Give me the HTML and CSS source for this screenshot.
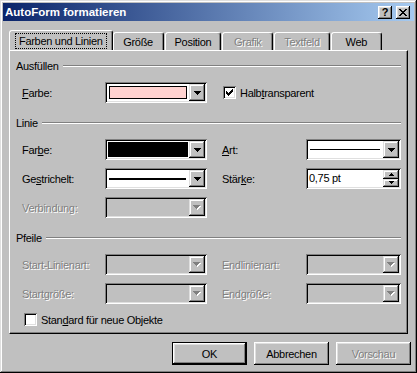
FILE: index.html
```html
<!DOCTYPE html>
<html lang="de">
<head>
    <meta charset="UTF-8">
    <title>AutoForm formatieren</title>
    <link rel="stylesheet" href="styles.css">
</head>
<body>
    <div class="window">
        <div class="titlebar">
            <span class="title">AutoForm formatieren</span>
            <div class="title-buttons">
                <span class="tbtn help">?</span>
                <span class="tbtn">
                    <svg width="8" height="7" viewBox="0 0 8 7" shape-rendering="crispEdges"><path d="M0 0h2v1h-2z M6 0h2v1h-2z M1 1h2v1h-2z M5 1h2v1h-2z M2 2h4v1h-4z M3 3h2v1h-2z M2 4h4v1h-4z M1 5h2v1h-2z M5 5h2v1h-2z M0 6h2v1h-2z M6 6h2v1h-2z" fill="#000"/></svg>
                </span>
            </div>
        </div>

        <div class="tabs">
            <div class="tab active"><span class="focus">Farben und Linien</span></div>
            <div class="tab">Größe</div>
            <div class="tab">Position</div>
            <div class="tab disabled">Grafik</div>
            <div class="tab disabled">Textfeld</div>
            <div class="tab">Web</div>
        </div>

        <div class="panel">
            <!-- Ausfüllen -->
            <div class="group-title first">Ausfüllen</div>
            <div class="rows">
                <span class="label"><u>F</u>arbe:</span>
                <div class="combo">
                    <div class="value"><div class="swatch pink"></div></div>
                    <div class="drop"><svg width="7" height="4" viewBox="0 0 7 4" shape-rendering="crispEdges"><path d="M0 0h7v1h-1v1h-1v1h-1v1h-1v-1h-1v-1h-1v-1h-1z" fill="#000"/></svg></div>
                </div>
                <div class="check-row span2">
                    <span class="box"><svg width="7" height="7" viewBox="0 0 7 7" shape-rendering="crispEdges"><path d="M0 2h1v3h-1z M1 3h1v3h-1z M2 4h1v3h-1z M3 3h1v3h-1z M4 2h1v3h-1z M5 1h1v3h-1z M6 0h1v3h-1z" fill="#000"/></svg></span>
                    <span>Halb<u>t</u>ransparent</span>
                </div>
            </div>

            <!-- Linie -->
            <div class="group-title">Linie</div>
            <div class="rows">
                <span class="label">Far<u>b</u>e:</span>
                <div class="combo">
                    <div class="value"><div class="swatch black"></div></div>
                    <div class="drop"><svg width="7" height="4" viewBox="0 0 7 4" shape-rendering="crispEdges"><path d="M0 0h7v1h-1v1h-1v1h-1v1h-1v-1h-1v-1h-1v-1h-1z" fill="#000"/></svg></div>
                </div>
                <span class="label"><u>A</u>rt:</span>
                <div class="combo wide">
                    <div class="value"><div class="line thin"></div></div>
                    <div class="drop"><svg width="7" height="4" viewBox="0 0 7 4" shape-rendering="crispEdges"><path d="M0 0h7v1h-1v1h-1v1h-1v1h-1v-1h-1v-1h-1v-1h-1z" fill="#000"/></svg></div>
                </div>

                <span class="label">Ge<u>s</u>trichelt:</span>
                <div class="combo">
                    <div class="value"><div class="line thick"></div></div>
                    <div class="drop"><svg width="7" height="4" viewBox="0 0 7 4" shape-rendering="crispEdges"><path d="M0 0h7v1h-1v1h-1v1h-1v1h-1v-1h-1v-1h-1v-1h-1z" fill="#000"/></svg></div>
                </div>
                <span class="label">Stär<u>k</u>e:</span>
                <div class="spin">
                    <span class="spin-text">0,75 pt</span>
                    <div class="spin-btns">
                        <div class="spin-btn"><svg width="5" height="3" viewBox="0 0 5 3" shape-rendering="crispEdges"><path d="M2 0h1v1h1v1h1v1h-5v-1h1v-1h1z" fill="#000"/></svg></div>
                        <div class="spin-btn"><svg width="5" height="3" viewBox="0 0 5 3" shape-rendering="crispEdges"><path d="M0 0h5v1h-1v1h-1v1h-1v-1h-1v-1h-1z" fill="#000"/></svg></div>
                    </div>
                </div>

                <span class="label disabled">Verbindung:</span>
                <div class="combo disabled">
                    <div class="value"></div>
                    <div class="drop"><svg width="8" height="5" viewBox="0 0 8 5" shape-rendering="crispEdges"><path transform="translate(1 1)" d="M0 0h7v1h-1v1h-1v1h-1v1h-1v-1h-1v-1h-1v-1h-1z" fill="#fff"/><path d="M0 0h7v1h-1v1h-1v1h-1v1h-1v-1h-1v-1h-1v-1h-1z" fill="#808080"/></svg></div>
                </div>
            </div>

            <!-- Pfeile -->
            <div class="group-title">Pfeile</div>
            <div class="rows">
                <span class="label disabled">Start-Linienart:</span>
                <div class="combo disabled">
                    <div class="value"></div>
                    <div class="drop"><svg width="8" height="5" viewBox="0 0 8 5" shape-rendering="crispEdges"><path transform="translate(1 1)" d="M0 0h7v1h-1v1h-1v1h-1v1h-1v-1h-1v-1h-1v-1h-1z" fill="#fff"/><path d="M0 0h7v1h-1v1h-1v1h-1v1h-1v-1h-1v-1h-1v-1h-1z" fill="#808080"/></svg></div>
                </div>
                <span class="label disabled">Endlinienart:</span>
                <div class="combo wide disabled">
                    <div class="value"></div>
                    <div class="drop"><svg width="8" height="5" viewBox="0 0 8 5" shape-rendering="crispEdges"><path transform="translate(1 1)" d="M0 0h7v1h-1v1h-1v1h-1v1h-1v-1h-1v-1h-1v-1h-1z" fill="#fff"/><path d="M0 0h7v1h-1v1h-1v1h-1v1h-1v-1h-1v-1h-1v-1h-1z" fill="#808080"/></svg></div>
                </div>

                <span class="label disabled">Startgröße:</span>
                <div class="combo disabled">
                    <div class="value"></div>
                    <div class="drop"><svg width="8" height="5" viewBox="0 0 8 5" shape-rendering="crispEdges"><path transform="translate(1 1)" d="M0 0h7v1h-1v1h-1v1h-1v1h-1v-1h-1v-1h-1v-1h-1z" fill="#fff"/><path d="M0 0h7v1h-1v1h-1v1h-1v1h-1v-1h-1v-1h-1v-1h-1z" fill="#808080"/></svg></div>
                </div>
                <span class="label disabled">Endgröße:</span>
                <div class="combo wide disabled">
                    <div class="value"></div>
                    <div class="drop"><svg width="8" height="5" viewBox="0 0 8 5" shape-rendering="crispEdges"><path transform="translate(1 1)" d="M0 0h7v1h-1v1h-1v1h-1v1h-1v-1h-1v-1h-1v-1h-1z" fill="#fff"/><path d="M0 0h7v1h-1v1h-1v1h-1v1h-1v-1h-1v-1h-1v-1h-1z" fill="#808080"/></svg></div>
                </div>
            </div>

            <div class="check-row standard">
                <span class="box"></span>
                <span>Stan<u>d</u>ard für neue Objekte</span>
            </div>
        </div>

        <div class="buttons">
            <div class="btn default">OK</div>
            <div class="btn">Abbrechen</div>
            <div class="btn disabled">Vorschau</div>
        </div>
    </div>
</body>
</html>
```

FILE: styles.css
```css
body {
    margin: 0;
    font-family: "Liberation Sans", Arial, sans-serif;
    font-size: 11px;
    letter-spacing: -0.3px;
    color: #000;
    background: #c0c0c0;
}
.window {
    width: 417px;
    height: 373px;
    box-sizing: border-box;
    padding: 3px;
    background: #c0c0c0;
    box-shadow: inset -1px -1px #000, inset 1px 1px #dfdfdf, inset -2px -2px #808080, inset 2px 2px #fff;
    display: flex;
    flex-direction: column;
}

/* title bar */
.titlebar {
    height: 18px;
    display: flex;
    align-items: center;
    justify-content: space-between;
    padding: 0 4px 0 2px;
    background: linear-gradient(to right, #0a246a, #a6caf0);
    color: #fff;
}
.title {
    font-weight: bold;
    font-size: 11.5px;
    letter-spacing: 0;
}
.title-buttons { display: flex; gap: 4px; }
.tbtn {
    width: 14px;
    height: 13px;
    background: #c0c0c0;
    box-shadow: inset -1px -1px #000, inset 1px 1px #fff, inset -2px -2px #808080, inset 2px 2px #dfdfdf;
    display: flex;
    align-items: center;
    justify-content: center;
    color: #000;
}
.tbtn.help { font-weight: bold; font-size: 11px; letter-spacing: 0; }

/* tabs */
.tabs {
    display: flex;
    align-items: flex-end;
    height: 20px;
    margin: 9px 0 0 6px;
}
.tab {
    height: 18px;
    min-width: 51px;
    box-sizing: border-box;
    padding: 0 9px;
    margin-right: 1px;
    border: 1px solid;
    border-bottom: none;
    border-color: #fff #000 transparent #fff;
    border-radius: 3px 3px 0 0;
    box-shadow: inset -1px 0 #808080;
    display: flex;
    align-items: center;
    justify-content: center;
    background: #c0c0c0;
}
.tab.active {
    height: 21px;
    margin-bottom: -1px;
    padding: 0 6px;
    margin-right: 0;
}
.tab.disabled { color: #808080; text-shadow: 1px 1px #fff; }
.focus {
    outline: 1px dotted #000;
    padding: 1px 3px;
}

/* panel */
.panel {
    margin: 0 6px;
    border: 1px solid;
    border-color: #fff #000 #000 #fff;
    box-shadow: inset -1px -1px #808080;
    padding: 8px 6px 7px;
}
.group-title {
    display: flex;
    align-items: center;
    height: 13px;
    gap: 4px;
    margin-top: 13px;
}
.group-title.first { margin-top: 0; }
.group-title::after {
    content: "";
    flex: 1;
    border-top: 1px solid #808080;
    border-bottom: 1px solid #fff;
}
.rows {
    display: grid;
    grid-template-columns: 83px 117px 84px 95px;
    row-gap: 8px;
    align-items: center;
    margin: 10px 0 0 6px;
}
.label.disabled, .btn.disabled { color: #808080; text-shadow: 1px 1px #fff; }
.span2 { grid-column: span 2; }

/* combobox */
.combo {
    width: 102px;
    height: 21px;
    box-sizing: border-box;
    padding: 2px;
    background: #fff;
    display: flex;
    box-shadow: inset 1px 1px #808080, inset -1px -1px #fff, inset 2px 2px #000, inset -2px -2px #dfdfdf;
}
.combo.wide { width: 95px; }
.combo.disabled { background: #c0c0c0; }
.value {
    flex: 1;
    display: flex;
    align-items: center;
}
.drop {
    width: 16px;
    height: 17px;
    background: #c0c0c0;
    box-shadow: inset -1px -1px #000, inset 1px 1px #dfdfdf, inset -2px -2px #808080, inset 2px 2px #fff;
    display: flex;
    align-items: center;
    justify-content: center;
}
.swatch {
    flex: 1;
    align-self: stretch;
    margin: 2px 2px 2px 2px;
    border: 1px solid #000;
}
.swatch.pink { background: #ffd2d0; }
.swatch.black { background: #000; margin: 1px 1px 1px 1px; }
.line {
    flex: 1;
    margin: 0 3px 0 2px;
    background: #000;
}
.line.thin { height: 1px; }
.line.thick { height: 2px; }

/* spinner */
.spin {
    width: 95px;
    height: 21px;
    box-sizing: border-box;
    padding: 2px;
    background: #fff;
    display: flex;
    box-shadow: inset 1px 1px #808080, inset -1px -1px #fff, inset 2px 2px #000, inset -2px -2px #dfdfdf;
}
.spin-text {
    flex: 1;
    padding-left: 1px;
    line-height: 17px;
}
.spin-btns {
    width: 16px;
    display: flex;
    flex-direction: column;
}
.spin-btn {
    flex: 1;
    background: #c0c0c0;
    box-shadow: inset -1px -1px #000, inset 1px 1px #dfdfdf, inset -2px -2px #808080, inset 2px 2px #fff;
    display: flex;
    align-items: center;
    justify-content: center;
}

/* checkboxes */
.check-row {
    display: flex;
    align-items: center;
    gap: 4px;
    padding-left: 1px;
}
.box {
    width: 13px;
    height: 13px;
    box-sizing: border-box;
    background: #fff;
    box-shadow: inset 1px 1px #808080, inset -1px -1px #fff, inset 2px 2px #000, inset -2px -2px #dfdfdf;
    display: flex;
    align-items: center;
    justify-content: center;
}
.check-row.standard { margin: 9px 0 0 8px; padding-left: 0; }

/* buttons */
.buttons {
    display: flex;
    justify-content: flex-end;
    gap: 7px;
    margin-top: 8px;
    padding-right: 3px;
}
.btn {
    width: 75px;
    height: 23px;
    background: #c0c0c0;
    box-shadow: inset -1px -1px #000, inset 1px 1px #fff, inset -2px -2px #808080, inset 2px 2px #dfdfdf;
    display: flex;
    align-items: center;
    justify-content: center;
}
.btn.default {
    box-shadow: inset 0 0 0 1px #000, inset -2px -2px #000, inset 2px 2px #fff, inset -3px -3px #808080, inset 3px 3px #dfdfdf;
}
```
